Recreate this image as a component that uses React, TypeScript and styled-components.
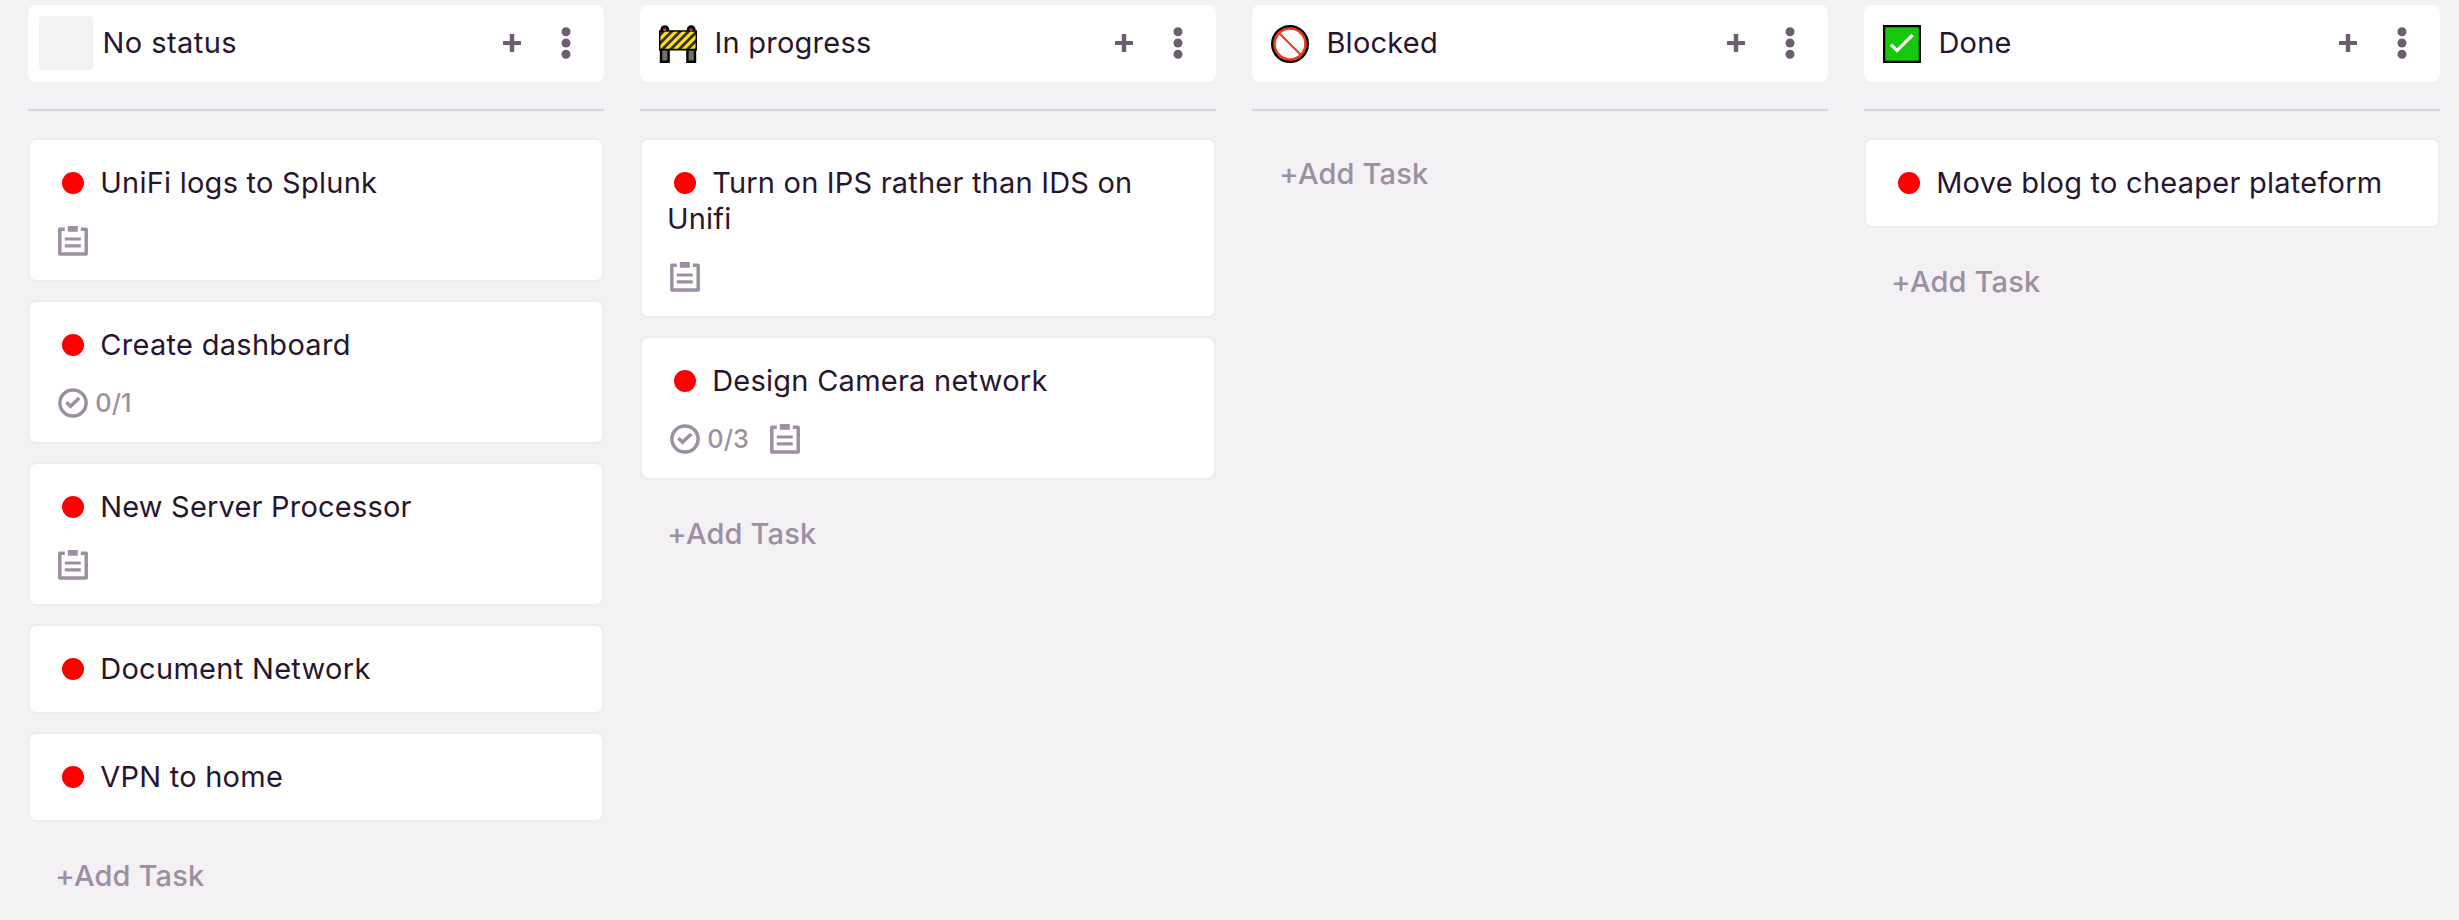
import React from 'react';
import styled, { createGlobalStyle } from 'styled-components';

const GlobalStyle = createGlobalStyle`
  *, *::before, *::after { box-sizing: border-box; }
  body {
    margin: 0;
    background: #f3f1f4;
    color: #28152e;
    font-family: Inter, "Liberation Sans", sans-serif;
    font-size: 29px;
    line-height: 36px;
    -webkit-font-smoothing: antialiased;
  }
`;

const Board = styled.main`
  display: flex;
  align-items: flex-start;
  gap: 36px;
  height: 920px;
  padding: 5px 0 0 28px;
  overflow: hidden;
`;

const Column = styled.section`
  display: flex;
  flex-direction: column;
  flex: 0 0 576px;
`;

const ColumnHeader = styled.header`
  display: flex;
  align-items: center;
  height: 77px;
  padding: 0 19px 1px 11px;
  border-radius: 8px;
  background: #fff;
`;

const StatusIcon = styled.span<{ $empty?: boolean }>`
  display: flex;
  align-items: center;
  justify-content: center;
  flex: none;
  width: 54px;
  height: 54px;
  padding-top: 2px;
  border-radius: 4px;
  background: ${p => (p.$empty ? '#f3f1f4' : 'transparent')};
`;

const ColumnTitle = styled.h2<{ $tracking: number }>`
  flex: 1;
  margin: 0 0 0 9.4px;
  font-size: 29px;
  font-weight: 400;
  letter-spacing: ${p => p.$tracking}px;
`;

const IconButton = styled.button`
  display: flex;
  align-items: center;
  justify-content: center;
  width: 38px;
  height: 38px;
  padding: 0;
  border: 0;
  background: none;
  color: #6c5d71;

  & + & { margin-left: 16px; }
`;

const Divider = styled.hr`
  flex: none;
  width: 100%;
  height: 2px;
  margin: 27px 0;
  border: 0;
  background: #d6d4de;
`;

const Card = styled.article`
  margin-bottom: 18px;
  padding: 25px 24px 25px 25px;
  border: 2px solid #edecef;
  border-radius: 8px;
  background: #fff;
`;

const CardTitle = styled.h3<{ $tracking: number }>`
  margin: 0;
  font-size: 29px;
  font-weight: 400;
  letter-spacing: ${p => p.$tracking}px;
`;

const Dot = styled.span`
  display: inline-block;
  width: 22.6px;
  height: 22.6px;
  margin: 0 15.9px 0 6.7px;
  border-radius: 50%;
  background: #ff0000;
  vertical-align: -1.3px;
  line-height: 0;
`;

const Meta = styled.div`
  display: flex;
  align-items: flex-start;
  height: 54px;
  padding: 25px 0 0 3px;
  color: #9d8fa2;

  svg { flex: none; }
`;

const Progress = styled.span`
  margin: 0 21.6px 0 7.3px;
  font-size: 25.3px;
  line-height: 29px;
  font-weight: 500;
`;

const AddTask = styled.button`
  align-self: flex-start;
  margin: 18px 0 0 27.3px;
  padding: 0;
  border: 0;
  background: none;
  color: #9d8fa2;
  font: 500 29px/36px Inter, "Liberation Sans", sans-serif;
  letter-spacing: 0.2px;
`;

const PlusIcon = () => (
  <svg width="18" height="18" viewBox="0 0 18 18" fill="currentColor">
    <path d="M6.8 0h4.4v6.9H18v4.2h-6.8V18H6.8v-6.9H0V6.9h6.8z" />
  </svg>
);

const MoreIcon = () => (
  <svg width="10" height="32" viewBox="0 0 10 32" fill="currentColor">
    <circle cx="5" cy="4.8" r="4.5" />
    <circle cx="5" cy="16" r="4.5" />
    <circle cx="5" cy="27.2" r="4.5" />
  </svg>
);

const NotesIcon = () => (
  <svg width="30" height="30" viewBox="0 0 30 30">
    <path d="M6.8 3.2H1.8V28.1H28.2V3.2H22.8" fill="none" stroke="currentColor" strokeWidth="3.5" strokeLinejoin="round" />
    <path d="M9.8 0h10v5.7h-10zM6.8 11.4h16v3.1h-16zM6.8 18.3h16v3.1h-16z" fill="currentColor" />
  </svg>
);

const CheckIcon = () => (
  <svg width="30" height="30" viewBox="0 0 30 30" fill="none" stroke="currentColor" strokeWidth="3.5">
    <circle cx="15" cy="15" r="13.1" />
    <path d="M8.4 14.2 12.6 18.3 21.2 9.9" />
  </svg>
);

const BarrierIcon = () => (
  <svg width="38" height="38" viewBox="0 0 38 38">
    <defs>
      <clipPath id="board"><path d="M1.5 6.8h35v17h-35z" /></clipPath>
    </defs>
    <path d="M2 24h7.6v12.7H2zM28.4 24H36v12.7h-7.6z" fill="#707070" stroke="#000" strokeWidth="2.4" />
    <path d="M2.6 7V4.6a3.2 3.2 0 0 1 6.4 0V7M29 7V4.6a3.2 3.2 0 0 1 6.4 0V7" fill="#333" stroke="#000" strokeWidth="2.4" />
    <path d="M0 5.2h38v20.2H0z" fill="#000" />
    <g clipPath="url(#board)">
      <path d="M0 5h38v20H0z" fill="#2d2d2d" />
      <path d="M-12 27 12 3M-3.6 27 20.4 3M4.8 27l24-24M13.2 27l24-24M21.6 27l24-24M30 27 54 3" stroke="#ffe000" strokeWidth="3.2" />
    </g>
    <circle cx="5.8" cy="5" r="1.6" fill="#d22f3d" />
    <circle cx="32.2" cy="5" r="1.6" fill="#d22f3d" />
  </svg>
);

const BlockedIcon = () => (
  <svg width="38" height="38" viewBox="0 0 38 38" fill="none">
    <circle cx="19" cy="19" r="15.7" stroke="#f1381d" strokeWidth="3" />
    <path d="M8.2 8.2 29.8 29.8" stroke="#f1381d" strokeWidth="2" />
    <circle cx="19" cy="19" r="17.9" stroke="#000" strokeWidth="2.2" />
  </svg>
);

const DoneIcon = () => (
  <svg width="38" height="38" viewBox="0 0 38 38">
    <path d="M1.1 1.1h35.8v35.8H1.1z" fill="#17c70d" stroke="#000" strokeWidth="2.2" />
    <path d="M8 19.6 14 25.6 29.6 10" fill="none" stroke="#fff" strokeWidth="3.2" />
  </svg>
);

interface Task {
  title: string;
  tracking?: number;
  progress?: string;
  notes?: boolean;
}

interface Status {
  name: string;
  tracking?: number;
  icon?: React.ReactNode;
  tasks: Task[];
}

const statuses: Status[] = [
  {
    name: 'No status',
    tracking: 0.45,
    tasks: [
      { title: 'UniFi logs to Splunk', notes: true },
      { title: 'Create dashboard', tracking: 0.3, progress: '0/1' },
      { title: 'New Server Processor', tracking: 0.2, notes: true },
      { title: 'Document Network', tracking: 0.3 },
      { title: 'VPN to home' },
    ],
  },
  {
    name: 'In progress',
    icon: <BarrierIcon />,
    tasks: [
      { title: 'Turn on IPS rather than IDS on Unifi', tracking: 0.2, notes: true },
      { title: 'Design Camera network', progress: '0/3', notes: true },
    ],
  },
  { name: 'Blocked', icon: <BlockedIcon />, tasks: [] },
  { name: 'Done', icon: <DoneIcon />, tasks: [{ title: 'Move blog to cheaper plateform' }] },
];

const TaskCard = ({ title, tracking = 0.25, progress, notes }: Task) => (
  <Card>
    <CardTitle $tracking={tracking}><Dot />{title}</CardTitle>
    {(progress || notes) && (
      <Meta>
        {progress && <><CheckIcon /><Progress>{progress}</Progress></>}
        {notes && <NotesIcon />}
      </Meta>
    )}
  </Card>
);

export default function App() {
  return (
    <>
      <GlobalStyle />
      <Board>
        {statuses.map(({ name, tracking = 0.25, icon, tasks }) => (
          <Column key={name}>
            <ColumnHeader>
              <StatusIcon $empty={!icon}>{icon}</StatusIcon>
              <ColumnTitle $tracking={tracking}>{name}</ColumnTitle>
              <IconButton aria-label="Add task"><PlusIcon /></IconButton>
              <IconButton aria-label="More"><MoreIcon /></IconButton>
            </ColumnHeader>
            <Divider />
            {tasks.map(task => <TaskCard key={task.title} {...task} />)}
            <AddTask>+Add Task</AddTask>
          </Column>
        ))}
      </Board>
    </>
  );
}
